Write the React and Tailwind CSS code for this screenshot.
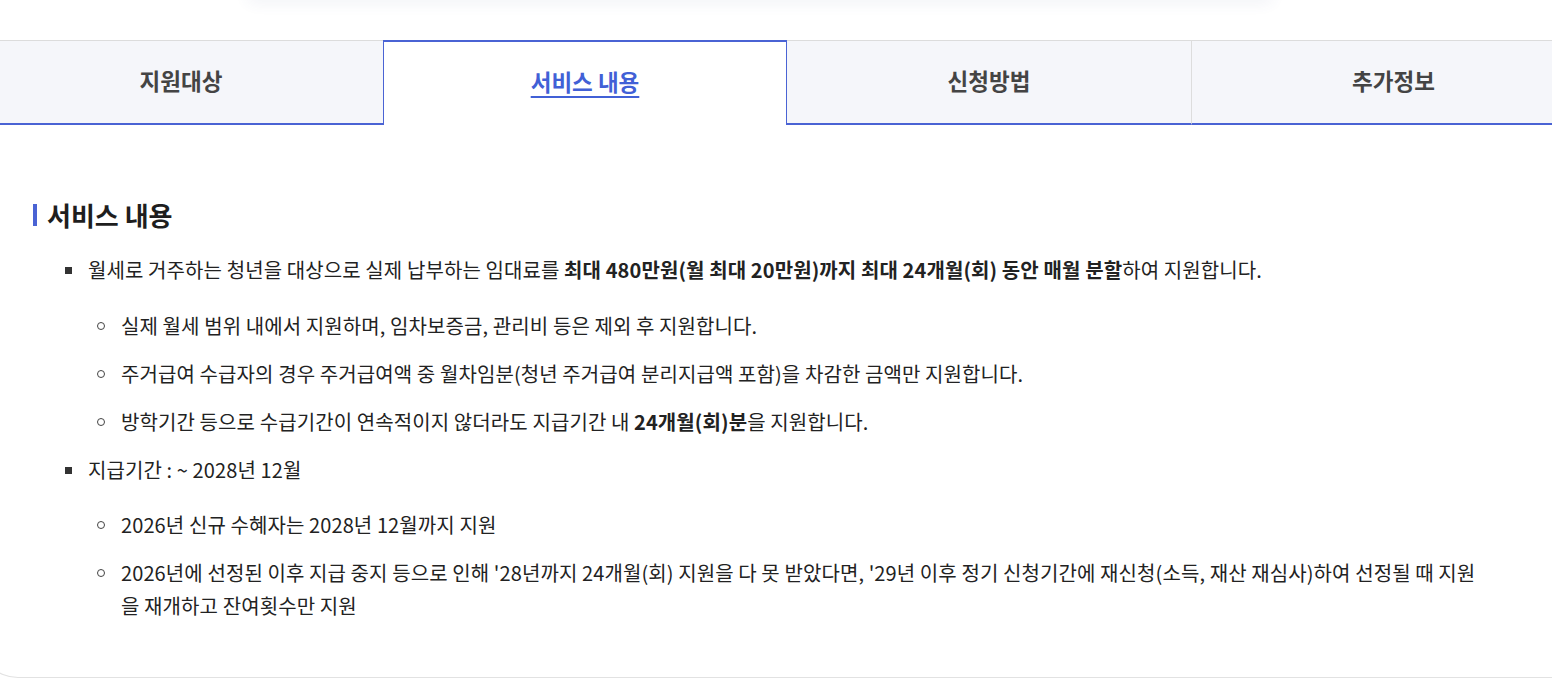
import React from 'react';

const tabs = [
  { label: '지원대상' },
  { label: '서비스 내용', active: true },
  { label: '신청방법' },
  { label: '추가정보' },
];

function Square() {
  return (
    <span className="w-[23px] shrink-0 pt-[14px]">
      <span className="block w-[7px] h-[7px] bg-[#333]" />
    </span>
  );
}

function Circle() {
  return (
    <span className="w-[33px] shrink-0 pl-[9px] pt-[13px]">
      <span className="block w-[8px] h-[8px] rounded-full border border-[#444]" />
    </span>
  );
}

function SubItem({ children, className = '' }) {
  return (
    <li className={'flex ' + className}>
      <Circle />
      <p>{children}</p>
    </li>
  );
}

export default function App() {
  return (
    <div className="min-h-screen bg-white overflow-hidden flex flex-col font-['Noto_Sans_CJK_KR',sans-serif] text-[#222]">
      {/* shadow of the card above */}
      <div className="h-[40px] flex flex-col">
        <div className="ml-[245px] w-[1030px] h-[12px] -mt-[12px] rounded-b-[20px] shadow-[0_4px_14px_rgba(70,80,140,0.07)]" />
      </div>

      <div className="-ml-[22px] w-[1616px] border-x border-b border-[#e2e2e2] rounded-b-[40px]">
        <div className="flex h-[85px]">
          {tabs.map((t, i) =>
            t.active ? (
              <div
                key={t.label}
                className="w-[404px] shrink-0 flex items-center justify-center bg-white border-t-2 border-x border-[#4a63d4]"
              >
                <span className="text-[22.5px] font-bold text-[#4160d6] underline underline-offset-[5px] decoration-[2px] mt-[-4px]">
                  {t.label}
                </span>
              </div>
            ) : (
              <div
                key={t.label}
                className={
                  'w-[404px] shrink-0 flex items-center justify-center bg-[#f5f6fa] border-t border-t-[#dcdcdc] border-b-2 border-b-[#4a63d4]' +
                  (i === 3 ? ' border-l border-l-[#dddddd]' : '')
                }
              >
                <span className="text-[22.5px] font-bold text-[#444] mt-[-2px]">{t.label}</span>
              </div>
            )
          )}
        </div>

        <div className="pl-[54px] pt-[73px] pb-[55px]">
          <h3 className="flex items-center gap-[10px] text-[26px] font-bold leading-[34px] text-[#1e1e1e]">
            <span className="w-[4px] h-[22px] bg-[#4a63d4]" />
            서비스 내용
          </h3>

          <ul className="mt-[21px] pl-[32px] w-[1457px] text-[20px] leading-[33px] tracking-[0.1px]">
            <li className="flex">
              <Square />
              <div>
                <p>
                  월세로 거주하는 청년을 대상으로 실제 납부하는 임대료를{' '}
                  <b>최대 480만원(월 최대 20만원)까지 최대 24개월(회) 동안 매월 분할</b>하여 지원합니다.
                </p>
                <ul className="mt-[23px]">
                  <SubItem>실제 월세 범위 내에서 지원하며, 임차보증금, 관리비 등은 제외 후 지원합니다.</SubItem>
                  <SubItem className="mt-[15px]">
                    주거급여 수급자의 경우 주거급여액 중 월차임분(청년 주거급여 분리지급액 포함)을 차감한 금액만 지원합니다.
                  </SubItem>
                  <SubItem className="mt-[15px]">
                    방학기간 등으로 수급기간이 연속적이지 않더라도 지급기간 내 <b>24개월(회)분</b>을 지원합니다.
                  </SubItem>
                </ul>
              </div>
            </li>
            <li className="flex mt-[15px]">
              <Square />
              <div>
                <p>지급기간 : ~ 2028년 12월</p>
                <ul className="mt-[22px]">
                  <SubItem>2026년 신규 수혜자는 2028년 12월까지 지원</SubItem>
                  <SubItem className="mt-[15px]">
                    2026년에 선정된 이후 지급 중지 등으로 인해 '28년까지 24개월(회) 지원을 다 못 받았다면, '29년 이후 정기 신청기간에 재신청(소득, 재산 재심사)하여 선정될 때 지원을 재개하고 잔여횟수만 지원
                  </SubItem>
                </ul>
              </div>
            </li>
          </ul>
        </div>
      </div>
    </div>
  );
}
